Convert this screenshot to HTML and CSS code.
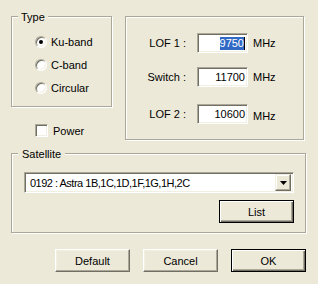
FILE: index.html
```html
<!DOCTYPE html>
<html lang="en">
<head>
  <meta charset="UTF-8" />
  <title>LNB Settings</title>
  <link rel="stylesheet" href="styles.css">
</head>
<body>
  <div class="dialog">
    <div class="top">
      <div class="left-col">
        <div class="group type-group">
          <span class="group-title">Type</span>
          <div class="radio-row"><span class="radio checked"></span>Ku-band</div>
          <div class="radio-row"><span class="radio"></span>C-band</div>
          <div class="radio-row"><span class="radio"></span>Circular</div>
        </div>
        <div class="check-row"><span class="checkbox"></span>Power</div>
      </div>

      <div class="group lof-group">
        <div class="lof-row">
          <span class="lof-label">LOF 1 :</span>
          <span class="field"><span class="sel">9750</span></span>
          <span class="unit">MHz</span>
        </div>
        <div class="lof-row">
          <span class="lof-label">Switch :</span>
          <span class="field">11700</span>
          <span class="unit">MHz</span>
        </div>
        <div class="lof-row wide-gap">
          <span class="lof-label">LOF 2 :</span>
          <span class="field">10600</span>
          <span class="unit low">MHz</span>
        </div>
      </div>
    </div>

    <div class="group sat-group">
      <span class="group-title sat-title">Satellite</span>
      <div class="combo">
        <span class="combo-text">0192 : Astra 1B,1C,1D,1F,1G,1H,2C</span>
        <span class="combo-btn">
          <svg width="7" height="4" viewBox="0 0 7 4"><polygon points="0,0 7,0 3.5,4" fill="#000"/></svg>
        </span>
      </div>
      <div class="list-row"><button class="btn default">List</button></div>
    </div>

    <div class="actions">
      <button class="btn">Default</button>
      <button class="btn">Cancel</button>
      <button class="btn default">OK</button>
    </div>
  </div>
</body>
</html>
```

FILE: styles.css
```css
body {
  margin: 0;
  background: #ece9d8;
  font-family: "Liberation Sans", Arial, sans-serif;
  font-size: 11px;
  color: #000;
}
.dialog {
  width: 318px;
  height: 284px;
  box-sizing: border-box;
  padding: 16px 0 0 11px;
}
.top {
  display: flex;
  align-items: flex-start;
}
.left-col {
  width: 101px;
}

/* etched group frame */
.group {
  position: relative;
  box-sizing: border-box;
  border: 1px solid #aca899;
  box-shadow: 1px 1px 0 #fff, inset 1px 1px 0 #fff;
}
.group-title {
  position: absolute;
  top: -6px;
  left: 6px;
  padding: 0 3px;
  line-height: 13px;
  background: #ece9d8;
}
.sat-title {
  left: 6px;
  padding: 0 4px;
}

.type-group {
  height: 91px;
  padding: 13px 0 0 23px;
}
.radio-row {
  display: flex;
  align-items: center;
  gap: 4px;
  height: 23px;
}
.radio {
  display: flex;
  align-items: center;
  justify-content: center;
  width: 12px;
  height: 12px;
  box-sizing: border-box;
  border-radius: 50%;
  background: #fff;
  border: 1px solid;
  border-color: #aca899 #fff #fff #aca899;
  box-shadow: inset 1px 1px 0 #716f64, inset -1px -1px 0 #f1efe2;
}
.radio.checked::after {
  content: "";
  width: 4px;
  height: 4px;
  border-radius: 50%;
  background: #000;
}
.check-row {
  display: flex;
  align-items: center;
  gap: 5px;
  height: 13px;
  margin: 17px 0 0 24px;
}
.checkbox,
.field,
.combo {
  box-sizing: border-box;
  background: #fff;
  border: 1px solid;
  border-color: #aca899 #fff #fff #aca899;
  box-shadow: inset 1px 1px 0 #716f64, inset -1px -1px 0 #f1efe2;
}
.checkbox {
  width: 13px;
  height: 13px;
}

.lof-group {
  width: 179px;
  height: 124px;
  margin-left: 13px;
  padding-top: 16px;
}
.lof-row {
  display: flex;
  align-items: center;
  height: 20px;
}
.lof-row + .lof-row {
  margin-top: 14px;
}
.lof-row.wide-gap {
  margin-top: 17px;
}
.lof-label {
  width: 60px;
  margin-right: 11px;
  text-align: right;
}
.field {
  display: flex;
  align-items: center;
  justify-content: flex-end;
  width: 51px;
  height: 20px;
  padding-right: 2px;
}
.sel {
  background: #316ac5;
  color: #fff;
  line-height: 13px;
  border-right: 1px solid #000;
}
.unit {
  margin-left: 5px;
}
.unit.low {
  padding-top: 4px;
}

.sat-group {
  width: 295px;
  height: 80px;
  margin-top: 13px;
  padding: 18px 0 0 12px;
}
.combo {
  display: flex;
  align-items: center;
  justify-content: space-between;
  width: 270px;
  height: 21px;
  padding: 2px;
}
.combo-text {
  padding-left: 3px;
  letter-spacing: -0.5px;
}
.combo-btn {
  display: flex;
  align-items: center;
  justify-content: center;
  width: 16px;
  height: 17px;
  box-sizing: border-box;
  background: #ece9d8;
  border: 1px solid;
  border-color: #f1efe2 #716f64 #716f64 #f1efe2;
  box-shadow: inset -1px -1px 0 #aca899, inset 1px 1px 0 #fff;
}
.list-row {
  display: flex;
  justify-content: flex-end;
  width: 270px;
  margin-top: 7px;
}

.btn {
  width: 75px;
  height: 23px;
  box-sizing: border-box;
  padding: 0;
  background: #ece9d8;
  font: inherit;
  color: #000;
  border: 1px solid;
  border-color: #fff #716f64 #716f64 #fff;
  box-shadow: inset -1px -1px 0 #aca899, inset 1px 1px 0 #f1efe2;
}
.btn.default {
  border-color: #000;
  box-shadow: inset 1px 1px 0 #fff, inset -1px -1px 0 #716f64, inset -2px -2px 0 #aca899;
}
.actions {
  display: flex;
  justify-content: flex-end;
  gap: 13px;
  width: 295px;
  margin-top: 16px;
}
```
